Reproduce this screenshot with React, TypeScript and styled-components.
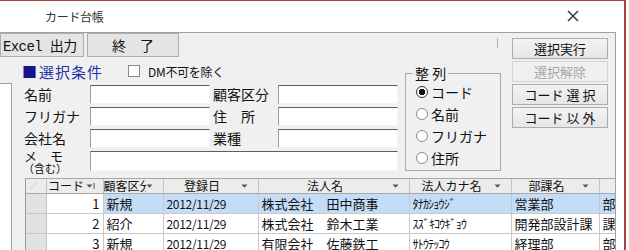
import React from 'react';
import styled, { createGlobalStyle } from 'styled-components';

const GlobalStyle = createGlobalStyle`
	html, body {
		margin: 0;
		padding: 0;
		background: #fff;
	}
	body {
		font-family: "Noto Sans CJK JP", "Noto Sans", sans-serif;
		color: #000;
	}
`;

const rows = [
	{ code: 1, kubun: '新規', date: '2012/11/29', name: '株式会社　田中商事', kana: 'ﾀﾅｶｼｮｳｼﾞ', dept: '営業部', post: '部長' },
	{ code: 2, kubun: '紹介', date: '2012/11/29', name: '株式会社　鈴木工業', kana: 'ｽｽﾞｷｺｳｷﾞｮｳ', dept: '開発部設計課', post: '課長' },
	{ code: 3, kubun: '新規', date: '2012/11/29', name: '有限会社　佐藤鉄工', kana: 'ｻﾄｳﾃｯｺｳ', dept: '経理部', post: '部長' },
];

const columns = [
	{ title: 'コード', width: 57, sorted: true },
	{ title: '顧客区分', width: 60, clip: true },
	{ title: '登録日', width: 95 },
	{ title: '法人名', width: 151 },
	{ title: '法人カナ名', width: 102 },
	{ title: '部課名', width: 88 },
	{ title: '役職', width: 100 },
];

const ArrowIcon = ({ sorted }: { sorted?: boolean }) => (
	<svg width="9" height="6" viewBox="0 0 9 6">
		<path d="M0.5 1.5 H6.5 L3.5 4.8 Z" fill="#555" />
		{sorted && <rect x="7.6" y="0" width="1" height="6" fill="#555" />}
	</svg>
);

const App = () => {
	return (
		<Window>
			<GlobalStyle />
			<Frame>
				<TitleBar>
					<Title>カード台帳</Title>
					<CloseButton>
						<svg width="12" height="12" viewBox="0 0 12 12">
							<path d="M1 1 L11 11 M11 1 L1 11" stroke="#3a3a3a" strokeWidth="1.5" />
						</svg>
					</CloseButton>
				</TitleBar>
				<Panel>
					<Toolbar>
						<ToolButton $width={84} $mono>Excel 出力</ToolButton>
						<ToolButton $width={92}>終　了</ToolButton>
						<Tick />
					</Toolbar>

					<SideButtons>
						<SideButton>選択実行</SideButton>
						<SideButton disabled>選択解除</SideButton>
						<SideButton>コード 選 択</SideButton>
						<SideButton>コード 以 外</SideButton>
					</SideButtons>

					<Strip />

					<Conditions>
						<FieldsPart>
							<Heading>
								<HeadingTitle><Square>■</Square>選択条件</HeadingTitle>
								<CheckBox />
								<CheckLabel>DM不可を除く</CheckLabel>
							</Heading>
							<FieldGrid>
								<Label>名前</Label>
								<TextBox />
								<Label $second>顧客区分</Label>
								<TextBox />
								<Label>フリガナ</Label>
								<TextBox />
								<Label $second>住　所</Label>
								<TextBox />
								<Label>会社名</Label>
								<TextBox />
								<Label $second>業種</Label>
								<TextBox />
								<MemoLabel>
									<span>メ　モ</span>
									<small>（含む）</small>
								</MemoLabel>
								<TextBox $wide />
							</FieldGrid>
						</FieldsPart>

						<SortBox>
							<SortLegend>整 列</SortLegend>
							<Radio $checked>コード</Radio>
							<Radio>名前</Radio>
							<Radio>フリガナ</Radio>
							<Radio>住所</Radio>
						</SortBox>
					</Conditions>

					<Sheet>
						<SheetTable>
							<colgroup>
								<col style={{ width: 20 }} />
								{columns.map(c => <col key={c.title} style={{ width: c.width }} />)}
							</colgroup>
							<thead>
								<tr>
									<CornerCell>
										<svg width="10" height="10" viewBox="0 0 10 10">
											<path d="M1 9 L9 1 L9 2.5 L2.5 9 Z" fill="#d4d4d4" />
										</svg>
									</CornerCell>
									{columns.map(c => (
										<HeadCell key={c.title}>
											<HeadInner>
												<HeadText $clip={c.clip}>{c.title}</HeadText>
												<ArrowIcon sorted={c.sorted} />
											</HeadInner>
										</HeadCell>
									))}
								</tr>
							</thead>
							<tbody>
								{rows.map((r, i) => (
									<tr key={r.code}>
										<SelectorCell />
										<Cell $right>{r.code}</Cell>
										<Cell $selected={i === 0}>{r.kubun}</Cell>
										<Cell $selected={i === 0} $date>{r.date}</Cell>
										<Cell $selected={i === 0}>{r.name}</Cell>
										<Cell $selected={i === 0} $kana>{r.kana}</Cell>
										<Cell $selected={i === 0}>{r.dept}</Cell>
										<Cell $selected={i === 0}>{r.post}</Cell>
									</tr>
								))}
							</tbody>
						</SheetTable>
					</Sheet>
				</Panel>
			</Frame>
		</Window>
	);
};

export default App;

const Window = styled.div`
	width: 629px;
	height: 250px;
	overflow: hidden;
	background: #fff;
`;

const Frame = styled.div`
	width: 624px;
	height: 250px;
	border-top: 1px solid #a8443f;
	border-right: 2px solid #a8443f;
	display: flex;
	flex-direction: column;
`;

const TitleBar = styled.div`
	height: 31px;
	flex: none;
	display: flex;
	align-items: center;
`;

const Title = styled.div`
	padding-left: 45px;
	font-size: 12px;
	color: #333;
	letter-spacing: -0.3px;
`;

const CloseButton = styled.div`
	margin-left: auto;
	margin-right: 45px;
	margin-top: -2px;
	display: flex;
`;

const Panel = styled.div`
	width: 615px;
	flex: 1;
	background: #f0f0f0;
	border-top: 1px solid #a0a0a0;
	border-right: 1px solid #a0a0a0;
	display: grid;
	grid-template-columns: 12px 500px 96px 7px;
	grid-template-rows: 24px auto 1fr;
	min-height: 0;
`;

const Toolbar = styled.div`
	grid-column: 1 / 3;
	grid-row: 1;
	display: flex;
	gap: 3px;
`;

const ToolButton = styled.div<{ $width: number; $mono?: boolean }>`
	width: ${p => p.$width}px;
	box-sizing: border-box;
	height: 24px;
	border: 1px solid #adadad;
	background: #e4e4e4;
	display: flex;
	align-items: center;
	justify-content: ${p => (p.$mono ? 'flex-start' : 'center')};
	padding-left: ${p => (p.$mono ? '2px' : '0')};
	font-size: 14px;
	font-family: ${p => (p.$mono ? '"Liberation Mono", "Noto Sans CJK JP", monospace' : '"Noto Sans CJK JP", sans-serif')};
	letter-spacing: ${p => (p.$mono ? '-0.6px' : '0')};
	color: #111;
`;

const Tick = styled.div`
	margin-left: auto;
	margin-right: 14px;
	margin-top: 5px;
	width: 1px;
	height: 10px;
	background: #b0b0b0;
`;

const SideButtons = styled.div`
	grid-column: 3;
	grid-row: 1 / 3;
	padding-top: 5px;
	display: flex;
	flex-direction: column;
	gap: 2px;
`;

const SideButton = styled.div<{ disabled?: boolean }>`
	height: 21px;
	box-sizing: border-box;
	border: 1px solid ${p => (p.disabled ? '#d2d2d2' : '#acacac')};
	background: ${p => (p.disabled ? '#f0f0f0' : 'linear-gradient(#f3f3f3, #e6e6e6)')};
	color: ${p => (p.disabled ? '#a6a6a6' : '#111')};
	font-size: 13px;
	display: flex;
	align-items: center;
	justify-content: center;
	white-space: pre;
`;

const Strip = styled.div`
	grid-column: 1;
	grid-row: 2 / 4;
	margin-top: 26px;
	background: #fff;
	border-top: 1px solid #a0a0a0;
	border-right: 1px solid #a0a0a0;
`;

const Conditions = styled.div`
	grid-column: 2;
	grid-row: 2;
	display: flex;
	align-items: flex-start;
`;

const FieldsPart = styled.div`
	width: 386px;
	display: flex;
	flex-direction: column;
`;

const Heading = styled.div`
	height: 28px;
	display: flex;
	align-items: center;
	padding-left: 10px;
`;

const HeadingTitle = styled.div`
	width: 106px;
	font-size: 15px;
	letter-spacing: 1px;
	color: #2433a6;
`;

const Square = styled.span`
	color: #14148c;
	margin-right: 1px;
`;

const CheckBox = styled.div`
	width: 12px;
	height: 12px;
	box-sizing: border-box;
	border: 1px solid #8a8a8a;
	background: #fff;
	margin-right: 8px;
`;

const CheckLabel = styled.div`
	font-size: 12px;
	letter-spacing: -0.3px;
	color: #111;
`;

const FieldGrid = styled.div`
	display: grid;
	grid-template-columns: 66px 120px 68px 120px;
	grid-auto-rows: 19px;
	row-gap: 3px;
	padding-left: 12px;
`;

const Label = styled.div<{ $second?: boolean }>`
	font-size: 14px;
	line-height: 19px;
	padding-left: ${p => (p.$second ? '3px' : '0')};
	color: #111;
	white-space: nowrap;
`;

const MemoLabel = styled.div`
	display: flex;
	flex-direction: column;
	margin-top: -2px;
	color: #111;
	span {
		font-size: 13px;
		line-height: 13px;
	}
	small {
		font-size: 11px;
		line-height: 12px;
		margin-left: -1px;
	}
`;

const TextBox = styled.div<{ $wide?: boolean }>`
	grid-column: ${p => (p.$wide ? '2 / 5' : 'auto')};
	height: ${p => (p.$wide ? '20px' : '19px')};
	box-sizing: border-box;
	background: #fff;
	border-top: 1px solid #5e5e5e;
	border-left: 1px solid #9c9c9c;
	border-right: 1px solid #f4f4f4;
	border-bottom: 1px solid #f4f4f4;
`;

const SortBox = styled.fieldset`
	margin: 8px 0 0 7px;
	width: 96px;
	height: 106px;
	box-sizing: border-box;
	border: 1px solid #a9a9a9;
	padding: 0 0 0 10px;
	display: flex;
	flex-direction: column;
`;

const SortLegend = styled.legend`
	font-size: 14px;
	line-height: 16px;
	padding: 0 2px;
	margin-left: -3px;
	color: #111;
`;

const Radio = styled.div<{ $checked?: boolean }>`
	height: 22px;
	display: flex;
	align-items: center;
	gap: 3px;
	font-size: 14px;
	color: #111;
	&::before {
		content: '';
		width: 12px;
		height: 12px;
		box-sizing: border-box;
		border-radius: 50%;
		border: 1px solid ${p => (p.$checked ? '#333' : '#8c8c8c')};
		background: ${p => (p.$checked ? 'radial-gradient(circle, #111 0 3px, #fff 3.5px)' : '#fff')};
	}
`;

const Sheet = styled.div`
	grid-column: 2 / 5;
	grid-row: 3;
	margin: 7px 0 0 13px;
	overflow: hidden;
	border-left: 1px solid #9a9a9a;
	border-top: 1px solid #a8a8a8;
`;

const SheetTable = styled.table`
	border-collapse: collapse;
	table-layout: fixed;
	width: 673px;
	font-size: 13px;
	color: #111;
`;

const CornerCell = styled.th`
	height: 14px;
	padding: 0;
	background: #ececec;
	border-right: 1px solid #c4c4c4;
	border-bottom: 1px solid #a9a9a9;
	text-align: left;
	vertical-align: top;
	line-height: 0;
	svg {
		margin: 2px 0 0 2px;
	}
`;

const HeadCell = styled.th`
	height: 14px;
	padding: 0;
	background: #ececec;
	border-right: 1px solid #c4c4c4;
	border-bottom: 1px solid #a9a9a9;
	font-weight: normal;
`;

const HeadInner = styled.div`
	display: flex;
	align-items: center;
	height: 14px;
	padding-right: 8px;
`;

const HeadText = styled.div<{ $clip?: boolean }>`
	flex: 1;
	min-width: 0;
	overflow-x: ${p => (p.$clip ? 'clip' : 'visible')};
	white-space: nowrap;
	text-align: center;
	font-size: 12px;
	line-height: 14px;
`;

const SelectorCell = styled.td`
	height: 19px;
	padding: 0;
	background: #e2e2e2;
	border: 1px solid #c4c4c4;
	border-left: none;
`;

const Cell = styled.td<{ $selected?: boolean; $right?: boolean; $date?: boolean; $kana?: boolean }>`
	height: 19px;
	padding: 0 3px;
	background: ${p => (p.$selected ? '#c4ddf6' : '#fff')};
	border: 1px solid #c8c8c8;
	text-align: ${p => (p.$right ? 'right' : 'left')};
	white-space: nowrap;
	font-size: ${p => (p.$date || p.$kana ? '12px' : '13px')};
	letter-spacing: ${p => (p.$date ? '-0.3px' : p.$kana ? '-0.8px' : '0')};
	line-height: 18px;
`;
